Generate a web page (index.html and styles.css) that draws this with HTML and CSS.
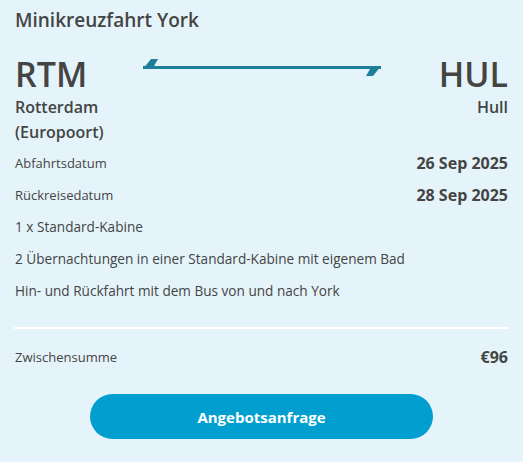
FILE: index.html
```html
<!DOCTYPE html>
<html lang="de">
<head>
  <meta charset="UTF-8">
  <title>Minikreuzfahrt York</title>
  <link rel="stylesheet" href="styles.css">
</head>
<body>
  <div class="summary">
    <h2 class="title">Minikreuzfahrt York</h2>
    <div class="route">
      <div class="port">
        <div class="code">RTM</div>
        <div class="city">Rotterdam<br>(Europoort)</div>
      </div>
      <svg class="arrow" width="238" height="20" viewBox="0 0 238 20">
        <path d="M0 11 L8 1 L15 1 L11 8 L238 8 L238 11 Z" fill="#1f7f9a"/>
        <path d="M0 8 L238 8 L230 18 L223 18 L227 11 L0 11 Z" fill="#1f7f9a"/>
      </svg>
      <div class="port right">
        <div class="code">HUL</div>
        <div class="city">Hull</div>
      </div>
    </div>
    <div class="row">
      <span class="label">Abfahrtsdatum</span>
      <span class="value">26 Sep 2025</span>
    </div>
    <div class="row">
      <span class="label">Rückreisedatum</span>
      <span class="value">28 Sep 2025</span>
    </div>
    <div class="item">1 x Standard-Kabine</div>
    <div class="item">2 Übernachtungen in einer Standard-Kabine mit eigenem Bad</div>
    <div class="item">Hin- und Rückfahrt mit dem Bus von und nach York</div>
    <hr class="divider">
    <div class="row total">
      <span class="label">Zwischensumme</span>
      <span class="value">€96</span>
    </div>
    <div class="actions">
      <button class="request-btn">Angebotsanfrage</button>
    </div>
  </div>
</body>
</html>
```

FILE: styles.css
```css
body { font-family: "Open Sans", Arial, sans-serif; background: #e4f4fa; color: #444; margin: 0; }
.summary { padding: 7px 15px 0 15px; }
.title { font-size: 19px; font-weight: 600; margin: 0 0 20px 0; line-height: 26px; }
.route { display: grid; grid-template-columns: 1fr 238px 1fr; align-items: start; margin-bottom: 2px; }
.port { display: flex; flex-direction: column; }
.port.right { align-items: flex-end; text-align: right; }
.code { font-size: 34px; font-weight: 600; line-height: 42px; }
.city { font-size: 16px; font-weight: 600; line-height: 25px; }
.arrow { margin-top: 5px; }
.row { display: flex; justify-content: space-between; align-items: center; height: 32px; }
.label { font-size: 13px; }
.value { font-size: 16px; font-weight: 700; }
.item { font-size: 13.6px; line-height: 32px; }
.divider { border: none; border-top: 2px solid #fff; margin: 20px -1px 12px -1px; }
.actions { display: flex; justify-content: center; margin-top: 21px; }
.request-btn { background: #009fd0; color: #fff; border: none; border-radius: 23px; width: 343px; height: 45px; font-family: inherit; font-size: 15px; font-weight: 700; cursor: pointer; }
```
